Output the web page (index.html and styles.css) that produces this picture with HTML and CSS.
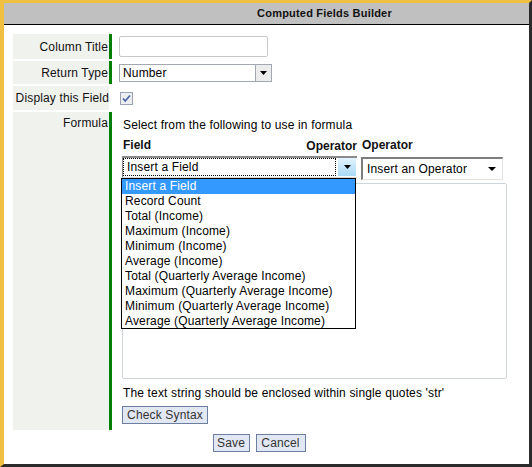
FILE: index.html
```html
<!DOCTYPE html>
<html>
<head>
<meta charset="utf-8">
<link rel="stylesheet" href="styles.css">
</head>
<body>
<div class="window">
  <div class="titlebar">Computed Fields Builder</div>
  <div class="body">
    <div class="form">
      <div class="label">Column Title</div>
      <div class="cell"><div class="textbox"></div></div>

      <div class="label">Return Type</div>
      <div class="cell">
        <div class="select-classic">
          <span class="sel-text">Number</span>
          <span class="sel-btn"><svg width="7" height="4" viewBox="0 0 7 4"><path d="M0 0H7L3.5 4Z" fill="#000"/></svg></span>
        </div>
      </div>

      <div class="label nobar">Display this Field</div>
      <div class="cell">
        <svg class="checkbox" width="13" height="13" viewBox="0 0 13 13">
          <rect x="0.5" y="0.5" width="12" height="12" fill="#eceef2" stroke="#9aa3b3"/>
          <path d="M3 6.5L5.2 9L10 3.5" fill="none" stroke="#4a62a8" stroke-width="1.7"/>
        </svg>
      </div>

      <div class="label top">Formula</div>
      <div class="cell formula">
        <div class="line">Select from the following to use in formula</div>
        <div class="heads">
          <div class="head-field"><span>Field</span><span class="op-shadow">Operator</span></div>
          <div class="head-op">Operator</div>
        </div>
        <div class="pickers">
          <div class="field-select">
            <div class="focus-text">Insert a Field</div>
            <div class="blue-btn"><svg width="7" height="4" viewBox="0 0 7 4"><path d="M0 0H7L3.5 4Z" fill="#000"/></svg></div>
            <ul class="dropdown">
              <li class="hl">Insert a Field</li>
              <li>Record Count</li>
              <li>Total (Income)</li>
              <li>Maximum (Income)</li>
              <li>Minimum (Income)</li>
              <li>Average (Income)</li>
              <li>Total (Quarterly Average Income)</li>
              <li>Maximum (Quarterly Average Income)</li>
              <li>Minimum (Quarterly Average Income)</li>
              <li>Average (Quarterly Average Income)</li>
            </ul>
          </div>
          <div class="op-select">
            <span>Insert an Operator</span>
            <svg width="8" height="4" viewBox="0 0 8 4"><path d="M0 0H8L4 4Z" fill="#000"/></svg>
          </div>
        </div>
        <div class="textarea"></div>
        <div class="line note">The text string should be enclosed within single quotes 'str'</div>
        <div class="btn check">Check Syntax</div>
      </div>
    </div>
    <div class="actions">
      <div class="btn save">Save</div>
      <div class="btn cancel">Cancel</div>
    </div>
  </div>
</div>
</body>
</html>
```
FILE: styles.css
```css
* { box-sizing: border-box; }
html, body { margin: 0; padding: 0; }
body {
  font-family: "Liberation Sans", Arial, sans-serif;
  font-size: 12px;
  letter-spacing: 0.15px;
  color: #000;
  background: #fff;
}
.window {
  width: 532px;
  height: 467px;
  border-top: 3px solid #f0c040;
  border-left: 4px solid #f0c040;
  border-right: 3px solid #2b2b2b;
  border-bottom: 3px solid #2b2b2b;
  background: #fff;
}
.titlebar {
  height: 22px;
  background: #c0c0c0;
  border-bottom: 1px solid #000;
  font-weight: bold;
  font-size: 11px;
  letter-spacing: 0.2px;
  text-align: center;
  padding-left: 116px;
  line-height: 21px;
  color: #111;
}
.body {
  padding: 9px 20px 0 9px;
}
.form {
  display: grid;
  grid-template-columns: 99px 1fr;
  grid-template-rows: 25px 23px 24px auto;
  row-gap: 2px;
  width: 492px;
}
.label {
  background: #f0f2ee;
  border-right: 3px solid #008000;
  display: flex;
  align-items: center;
  justify-content: flex-end;
  padding-right: 1px;
  white-space: nowrap;
  color: #111;
}
.label.nobar {
  border-right-color: #fff;
  padding-right: 0;
}
.label.top {
  align-items: flex-start;
  padding-top: 4px;
}
.cell {
  padding-left: 7px;
  display: flex;
  align-items: center;
}
.textbox {
  width: 149px;
  height: 21px;
  border: 1px solid #c9c9c9;
  border-radius: 2px;
  background: #fff;
}
.select-classic {
  width: 153px;
  height: 18px;
  border: 1px solid #a3a8b0;
  display: flex;
  align-items: center;
  justify-content: space-between;
  background: #fff;
}
.sel-text { padding-left: 3px; }
.sel-btn {
  width: 16px;
  height: 16px;
  border-left: 1px solid #a3a8b0;
  background: #ececec;
  display: flex;
  align-items: center;
  justify-content: center;
}
.checkbox { margin-left: 1px; margin-top: 1px; }

.formula {
  display: block;
  padding: 6px 0 6px 10px;
}
.line {
  line-height: 14px;
  padding-left: 1px;
  white-space: nowrap;
}
.heads {
  display: flex;
  margin-top: 6px;
  line-height: 14px;
  font-weight: bold;
  letter-spacing: 0;
  color: #111;
}
.head-field {
  width: 235px;
  display: flex;
  justify-content: space-between;
  padding-left: 1px;
}
.op-shadow { position: relative; top: 1px; }
.head-op { margin-left: 5px; }
.pickers {
  display: flex;
  margin-top: 4px;
  height: 22px;
  gap: 4px;
}
.field-select {
  position: relative;
  width: 235px;
  height: 22px;
  border-top: 2px solid #8a8a8a;
  border-left: 1px solid #8a8a8a;
  border-bottom: 1px solid #d8d8d8;
  background: #fff;
  display: flex;
  align-items: stretch;
  padding: 0 1px 1px 0;
}
.focus-text {
  flex: 1;
  border: 1px dotted #000;
  padding-left: 3px;
  line-height: 16px;
  margin-right: 2px;
}
.blue-btn {
  width: 18px;
  background: linear-gradient(#e3f3fd, #a9d9f6);
  display: flex;
  align-items: center;
  justify-content: center;
}
.dropdown {
  position: absolute;
  left: -2px;
  top: 20px;
  width: 235px;
  height: 151px;
  margin: 0;
  padding: 0;
  list-style: none;
  background: #fff;
  border: 1px solid #000;
  z-index: 2;
}
.dropdown li {
  height: 15px;
  line-height: 15px;
  padding-left: 3px;
  white-space: nowrap;
}
.dropdown li.hl { background: #3399ff; color: #fff; }
.op-select {
  width: 142px;
  height: 23px;
  margin-top: 1px;
  border-top: 2px solid #7d7d7d;
  border-left: 2px solid #7d7d7d;
  border-right: 1px solid #e2e2e2;
  border-bottom: 1px solid #e2e2e2;
  display: flex;
  align-items: center;
  justify-content: space-between;
  padding: 0 6px 0 4px;
  background: #fff;
}
.textarea {
  margin-top: 5px;
  width: 385px;
  height: 196px;
  border: 1px solid #cfd5dc;
  border-radius: 2px;
  background: #fff;
}
.note { margin-top: 7px; }
.btn {
  display: inline-flex;
  align-items: center;
  justify-content: center;
  height: 18px;
  background: #e2e7f4;
  border: 1px solid #6e7ea0;
  color: #333;
  line-height: 16px;
}
.check { margin-top: 6px; width: 86px; }
.actions {
  display: flex;
  justify-content: center;
  gap: 6px;
  margin-top: 4px;
  width: 492px;
}
.save { width: 37px; }
.cancel { width: 50px; }
```
